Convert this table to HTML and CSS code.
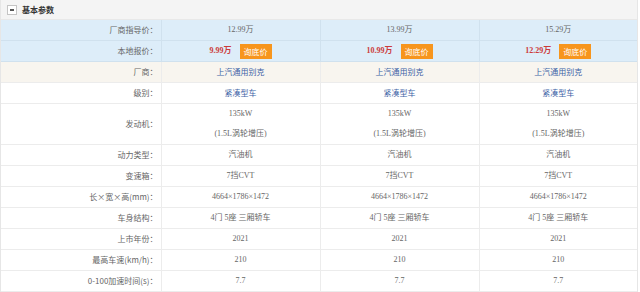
FILE: index.html
```html
<!DOCTYPE html>
<html lang="zh-CN">
<head>
    <meta charset="UTF-8">
    <title>基本参数</title>
    <link rel="stylesheet" href="styles.css">
</head>
<body>

    <div class="param-box">
        <div class="param-title">
            <span class="toggle"></span>
            <span class="title-text">基本参数</span>
        </div>

        <table class="param-table">
            <colgroup>
                <col class="col-label">
                <col class="col-car">
                <col class="col-car">
                <col>
            </colgroup>
            <tr class="row-blue">
                <th>厂商指导价：</th>
                <td>12.99万</td>
                <td>13.99万</td>
                <td>15.29万</td>
            </tr>
            <tr class="row-blue">
                <th>本地报价：</th>
                <td><span class="price">9.99万</span><a class="ask-btn">询底价</a></td>
                <td><span class="price">10.99万</span><a class="ask-btn">询底价</a></td>
                <td><span class="price">12.29万</span><a class="ask-btn">询底价</a></td>
            </tr>
            <tr class="row-beige">
                <th>厂商：</th>
                <td class="link">上汽通用别克</td>
                <td class="link">上汽通用别克</td>
                <td class="link">上汽通用别克</td>
            </tr>
            <tr>
                <th>级别：</th>
                <td class="link">紧凑型车</td>
                <td class="link">紧凑型车</td>
                <td class="link">紧凑型车</td>
            </tr>
            <tr class="row-tall">
                <th>发动机：</th>
                <td>135kW<br>(1.5L涡轮增压)</td>
                <td>135kW<br>(1.5L涡轮增压)</td>
                <td>135kW<br>(1.5L涡轮增压)</td>
            </tr>
            <tr>
                <th>动力类型：</th>
                <td>汽油机</td>
                <td>汽油机</td>
                <td>汽油机</td>
            </tr>
            <tr>
                <th>变速箱：</th>
                <td>7挡CVT</td>
                <td>7挡CVT</td>
                <td>7挡CVT</td>
            </tr>
            <tr>
                <th>长×宽×高(mm)：</th>
                <td class="small">4664×1786×1472</td>
                <td class="small">4664×1786×1472</td>
                <td class="small">4664×1786×1472</td>
            </tr>
            <tr>
                <th>车身结构：</th>
                <td>4门 5座 三厢轿车</td>
                <td>4门 5座 三厢轿车</td>
                <td>4门 5座 三厢轿车</td>
            </tr>
            <tr>
                <th>上市年份：</th>
                <td>2021</td>
                <td>2021</td>
                <td>2021</td>
            </tr>
            <tr>
                <th>最高车速(km/h)：</th>
                <td>210</td>
                <td>210</td>
                <td>210</td>
            </tr>
            <tr>
                <th>0-100加速时间(s)：</th>
                <td>7.7</td>
                <td>7.7</td>
                <td>7.7</td>
            </tr>
        </table>
    </div>

</body>
</html>
```

FILE: styles.css
```css
body {
    margin: 0;
    padding: 0;
    background-color: #fff;
    font-family: "Liberation Serif", "Noto Sans CJK SC", serif;
    color: #666;
}

.param-box {
    width: 636px;
    border-left: 1px solid #e6e6e6;
    border-right: 1px solid #e6e6e6;
    border-bottom: 1px solid #d8e6f0;
}

.param-title {
    display: flex;
    align-items: center;
    height: 19px;
    padding-left: 6px;
    background-color: #f4f4f4;
    border-bottom: 1px solid #e8e8e8;
}

/* small box with a minus sign */
.toggle {
    position: relative;
    width: 8px;
    height: 8px;
    border: 1px solid #c4c4c4;
    background-color: #fff;
}

.toggle::after {
    content: "";
    position: absolute;
    left: 2px;
    top: 3px;
    width: 4px;
    height: 2px;
    background-color: #555;
}

.title-text {
    margin-left: 5px;
    font-family: "Noto Sans CJK SC", sans-serif;
    font-size: 8px;
    font-weight: bold;
    color: #333;
}

.param-table {
    width: 100%;
    border-collapse: collapse;
    table-layout: fixed;
}

.col-label {
    width: 160px;
}

.col-car {
    width: 159px;
}

.param-table th,
.param-table td {
    height: 20px;
    padding: 0;
    border: 1px solid #ececec;
    font-size: 8px;
    line-height: 20px;
    text-align: center;
}

.param-table tr:first-child th,
.param-table tr:first-child td {
    border-top: none;
}

.param-table th:first-child {
    border-left: none;
}

.param-table td:last-child {
    border-right: none;
}

.param-table th {
    padding-right: 3px;
    text-align: right;
    font-weight: normal;
    font-family: "Noto Sans CJK SC", sans-serif;
    color: #666;
}

.row-blue th,
.row-blue td {
    background-color: #ddedf9;
    border-color: #d0e1ee;
}

.row-beige th,
.row-beige td {
    background-color: #f8f5ef;
}

.row-tall td,
.row-tall th {
    height: 39px;
}

.link {
    color: #3d63a6;
    font-family: "Noto Sans CJK SC", sans-serif;
}

.small {
    font-size: 7.5px;
}

.price {
    color: #cc3b3b;
    font-weight: bold;
}

.ask-btn {
    display: inline-block;
    margin-left: 8px;
    padding: 0 4px;
    height: 15px;
    line-height: 15px;
    background-color: #f7951d;
    color: #fff;
    font-family: "Noto Sans CJK SC", sans-serif;
    font-size: 8px;
    vertical-align: middle;
}
```
